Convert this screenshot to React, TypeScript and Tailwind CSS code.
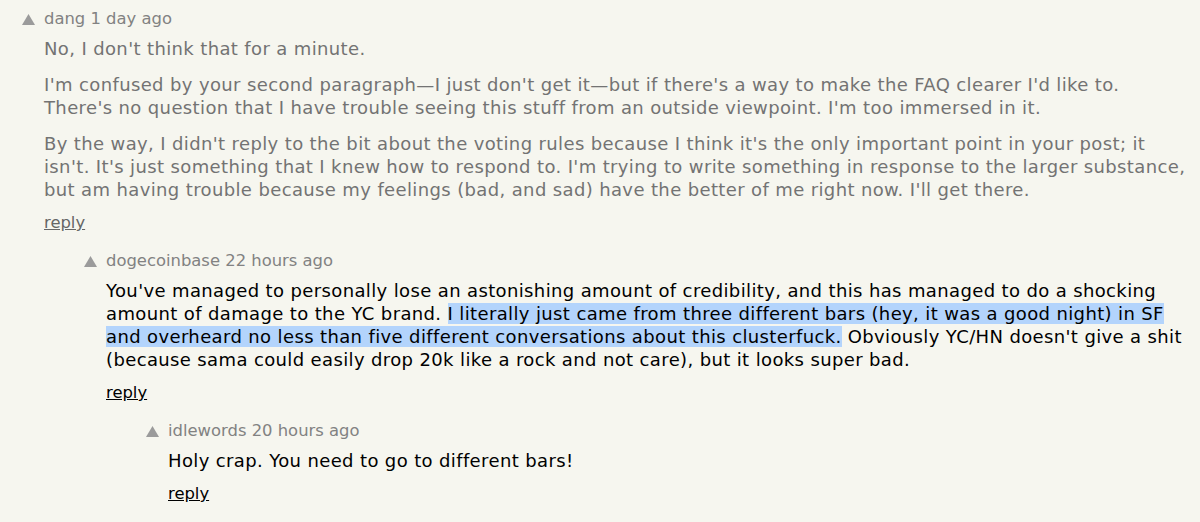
import type { ReactNode } from "react";

type CommentProps = {
  user: string;
  age: string;
  indent: string;
  faded?: boolean;
  children: ReactNode;
};

function Arrow() {
  return (
    <svg width="13" height="11" viewBox="0 0 13 11" className="shrink-0">
      <polygon points="6.5,0 13,11 0,11" fill="#9b9b9b" />
    </svg>
  );
}

function Comment({ user, age, indent, faded, children }: CommentProps) {
  return (
    <div className={`flex ${indent}`}>
      <div className="w-[22px] pt-[6px] shrink-0">
        <Arrow />
      </div>
      <div>
        <div className="text-[16.4px] leading-[22px] text-[#828282]">
          {user} {age}
        </div>
        <div
          className={`mt-[7px] text-[18px] leading-[23px] tracking-[0.37px] ${
            faded ? "text-[#737373]" : "text-black"
          }`}
        >
          {children}
        </div>
        <a
          href="#"
          className={`mt-[11px] block text-[16.4px] leading-[22px] underline ${
            faded ? "text-[#666666]" : "text-black"
          }`}
        >
          reply
        </a>
      </div>
    </div>
  );
}

export default function App() {
  return (
    <div
      className="min-h-[522px] bg-[#f6f6ef] pt-[8px]"
      style={{ fontFamily: '"DejaVu Sans", Verdana, sans-serif' }}
    >
      <div className="flex flex-col gap-[16px]">
        <Comment user="dang" age="1 day ago" indent="pl-[22px]" faded>
          <p>No, I don't think that for a minute.</p>
          <p className="mt-[13px]">
            I'm confused by your second paragraph—I just don't get it—but if there's a way to make the FAQ clearer I'd like to.
            <br />
            There's no question that I have trouble seeing this stuff from an outside viewpoint. I'm too immersed in it.
          </p>
          <p className="mt-[13px]">
            By the way, I didn't reply to the bit about the voting rules because I think it's the only important point in your post; it
            <br />
            isn't. It's just something that I knew how to respond to. I'm trying to write something in response to the larger substance,
            <br />
            but am having trouble because my feelings (bad, and sad) have the better of me right now. I'll get there.
          </p>
        </Comment>
        <Comment user="dogecoinbase" age="22 hours ago" indent="pl-[84px]">
          <p>
            You've managed to personally lose an astonishing amount of credibility, and this has managed to do a shocking
            <br />
            amount of damage to the YC brand.{" "}
            <span className="bg-[#b3d4fc]">
              I literally just came from three different bars (hey, it was a good night) in SF{" "}
              <br />
              and overheard no less than five different conversations about this clusterfuck.
            </span>{" "}
            Obviously YC/HN doesn't give a shit
            <br />
            (because sama could easily drop 20k like a rock and not care), but it looks super bad.
          </p>
        </Comment>
        <Comment user="idlewords" age="20 hours ago" indent="pl-[146px]">
          <p>Holy crap. You need to go to different bars!</p>
        </Comment>
      </div>
    </div>
  );
}
